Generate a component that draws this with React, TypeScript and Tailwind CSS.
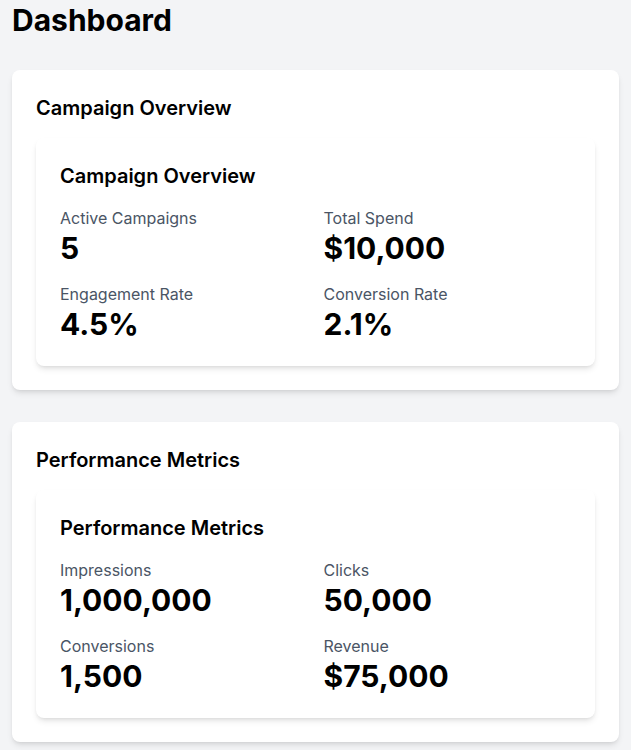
import React from 'react';

interface Metric {
  label: string;
  value: string;
}

interface Section {
  title: string;
  metrics: Metric[];
}

const sections: Section[] = [
  {
    title: 'Campaign Overview',
    metrics: [
      { label: 'Active Campaigns', value: '5' },
      { label: 'Total Spend', value: '$10,000' },
      { label: 'Engagement Rate', value: '4.5%' },
      { label: 'Conversion Rate', value: '2.1%' },
    ],
  },
  {
    title: 'Performance Metrics',
    metrics: [
      { label: 'Impressions', value: '1,000,000' },
      { label: 'Clicks', value: '50,000' },
      { label: 'Conversions', value: '1,500' },
      { label: 'Revenue', value: '$75,000' },
    ],
  },
];

function MetricCard({ title, metrics }: Section) {
  return (
    <div className="bg-white rounded-lg shadow-md p-6">
      <h3 className="text-xl font-semibold text-black mb-4">{title}</h3>
      <div className="grid grid-cols-2 gap-4">
        {metrics.map((m) => (
          <div key={m.label}>
            <p className="text-base text-gray-600">{m.label}</p>
            <p className="text-3xl font-bold text-black">{m.value}</p>
          </div>
        ))}
      </div>
    </div>
  );
}

export default function App() {
  return (
    <div className="min-h-screen bg-gray-100 px-3 pb-8 font-['Inter',sans-serif]">
      <h1 className="text-3xl font-bold text-black pt-0.5 mb-8">Dashboard</h1>
      <div className="space-y-8">
        {sections.map((s) => (
          <div key={s.title} className="bg-white rounded-lg shadow-md p-6">
            <h2 className="text-xl font-semibold text-black mb-4">{s.title}</h2>
            <MetricCard title={s.title} metrics={s.metrics} />
          </div>
        ))}
      </div>
    </div>
  );
}
